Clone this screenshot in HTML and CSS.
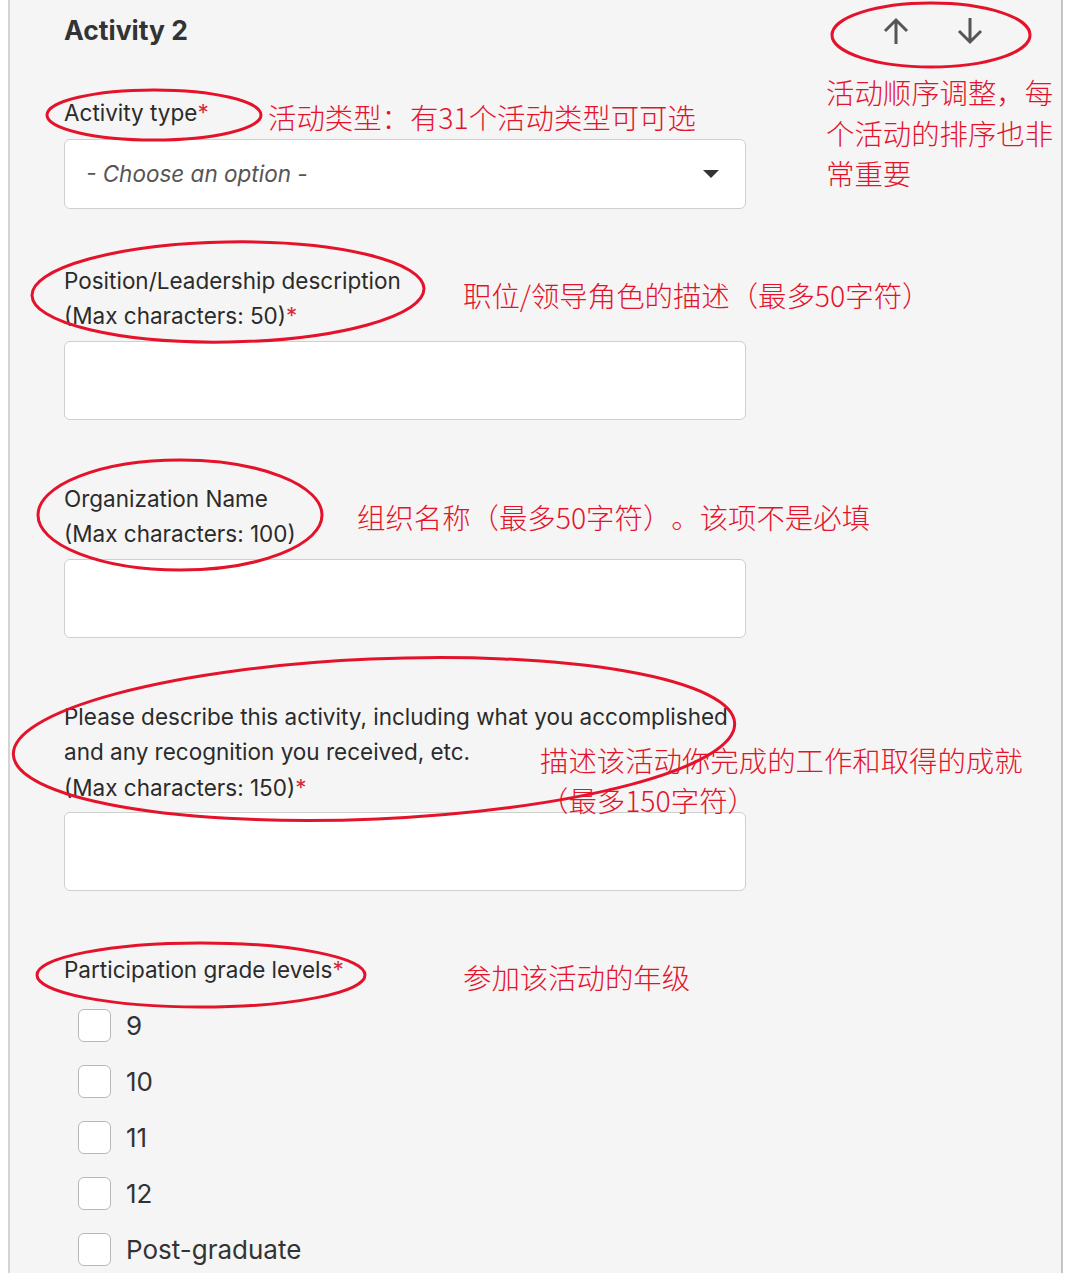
FILE: index.html
```html
<!DOCTYPE html>
<html lang="en">
<head>
<meta charset="utf-8">
<title>Activity 2</title>
<link rel="stylesheet" href="styles.css">
</head>
<body>
<div class="page">
  <div class="panel">
    <div class="header">
      <h2 class="title">Activity 2</h2>
      <div class="order">
        <svg class="arrow" viewBox="0 0 32 32" width="32" height="32"><path d="M16 29V5M5 16L16 5L27 16" fill="none" stroke="#555" stroke-width="3"/></svg>
        <svg class="arrow" viewBox="0 0 32 32" width="32" height="32"><path d="M16 3V27M5 16L16 27L27 16" fill="none" stroke="#555" stroke-width="3"/></svg>
      </div>
    </div>

    <div class="field first">
      <div class="label">Activity type<span class="req">*</span></div>
      <div class="select">
        <span class="placeholder">- Choose an option -</span>
        <span class="caret"></span>
      </div>
    </div>

    <div class="field second">
      <div class="label">Position/Leadership description<br>(Max characters: 50)<span class="req">*</span></div>
      <div class="input"></div>
    </div>

    <div class="field">
      <div class="label">Organization Name<br>(Max characters: 100)</div>
      <div class="input"></div>
    </div>

    <div class="field">
      <div class="label">Please describe this activity, including what you accomplished<br>and any recognition you received, etc.<br>(Max characters: 150)<span class="req">*</span></div>
      <div class="input"></div>
    </div>

    <div class="field">
      <div class="label">Participation grade levels<span class="req">*</span></div>
      <ul class="checks">
        <li class="check"><span class="box"></span><span>9</span></li>
        <li class="check"><span class="box"></span><span>10</span></li>
        <li class="check"><span class="box"></span><span>11</span></li>
        <li class="check"><span class="box"></span><span>12</span></li>
        <li class="check"><span class="box"></span><span>Post-graduate</span></li>
      </ul>
    </div>
  </div>

  <svg class="marks" viewBox="0 0 1080 1273" width="1080" height="1273">
    <g fill="none" stroke="#e4132b" stroke-width="3">
      <ellipse cx="931" cy="35" rx="99" ry="32"/>
      <ellipse cx="154" cy="115" rx="107" ry="25"/>
      <ellipse cx="228" cy="292" rx="196" ry="50" transform="rotate(-1 228 292)"/>
      <ellipse cx="180" cy="515" rx="142" ry="55"/>
      <ellipse cx="374" cy="739" rx="361" ry="80" transform="rotate(-2.5 374 739)"/>
      <ellipse cx="201" cy="975" rx="164" ry="32"/>
    </g>
  </svg>

  <div class="note n1">活动类型：有31个活动类型可可选</div>
  <div class="note n2">活动顺序调整，每<br>个活动的排序也非<br>常重要</div>
  <div class="note n3">职位/领导角色的描述（最多50字符）</div>
  <div class="note n4">组织名称（最多50字符）。该项不是必填</div>
  <div class="note n5">描述该活动你完成的工作和取得的成就<br>（最多150字符）</div>
  <div class="note n6">参加该活动的年级</div>
</div>
</body>
</html>
```

FILE: styles.css
```css
html, body {
  margin: 0;
  padding: 0;
  background: #ffffff;
}

.page {
  position: relative;
  width: 1080px;
  height: 1273px;
  overflow: hidden;
  font-family: "Inter", "Noto Sans", sans-serif;
  color: #2b2b2b;
}

.panel {
  margin-left: 8px;
  width: 1055px;
  height: 1273px;
  box-sizing: border-box;
  background: #f5f5f5;
  border-left: 2px solid #d4d4d4;
  border-right: 2px solid #c4c4c4;
  padding-left: 54px;
}

.header {
  display: flex;
  align-items: center;
  height: 60px;
}

.title {
  margin: 0;
  font-size: 26.5px;
  font-weight: 700;
  color: #333;
}

.order {
  margin-left: auto;
  margin-right: 75px;
  display: flex;
  gap: 42px;
  align-items: center;
  padding-top: 2px;
}

.arrow {
  display: block;
}

.field {
  width: 682px;
  margin-top: 61px;
}

.field.first {
  margin-top: 35px;
}

.field.second {
  margin-top: 54px;
}

.label {
  font-size: 22.5px;
  line-height: 35.5px;
  color: #2b2b2b;
  white-space: nowrap;
}

.req {
  color: #d8283a;
}

.select,
.input {
  box-sizing: border-box;
  background: #ffffff;
  border: 1px solid #cfcfcf;
  border-radius: 6px;
}

.select {
  margin-top: 8px;
  height: 70px;
  display: flex;
  align-items: center;
  padding: 0 26px 0 21px;
}

.placeholder {
  font-size: 22.5px;
  font-style: italic;
  color: #555;
}

.caret {
  margin-left: auto;
  width: 0;
  height: 0;
  border-left: 8px solid transparent;
  border-right: 8px solid transparent;
  border-top: 8px solid #333;
}

.input {
  margin-top: 7px;
  height: 79px;
}

.checks {
  list-style: none;
  margin: 21px 0 0 14px;
  padding: 0;
  display: flex;
  flex-direction: column;
  gap: 23px;
}

.check {
  display: flex;
  align-items: center;
  gap: 15px;
  height: 33px;
  font-size: 26px;
  color: #333;
}

.box {
  box-sizing: border-box;
  width: 33px;
  height: 33px;
  background: #fff;
  border: 1.5px solid #b8b8b8;
  border-radius: 6px;
}

.marks {
  position: absolute;
  left: 0;
  top: 0;
  pointer-events: none;
}

.note {
  position: absolute;
  font-family: "Noto Sans CJK SC", sans-serif;
  font-weight: 300;
  font-size: 28.4px;
  line-height: 40px;
  color: #e4132b;
  white-space: nowrap;
  text-spacing-trim: space-all;
}

.n1 { left: 268px; top: 97px; }
.n2 { left: 826px; top: 72px; line-height: 40.5px; }
.n3 { left: 463px; top: 275px; }
.n4 { left: 357px; top: 497px; }
.n5 { left: 540px; top: 740px; }
.n6 { left: 463px; top: 957px; }
```
